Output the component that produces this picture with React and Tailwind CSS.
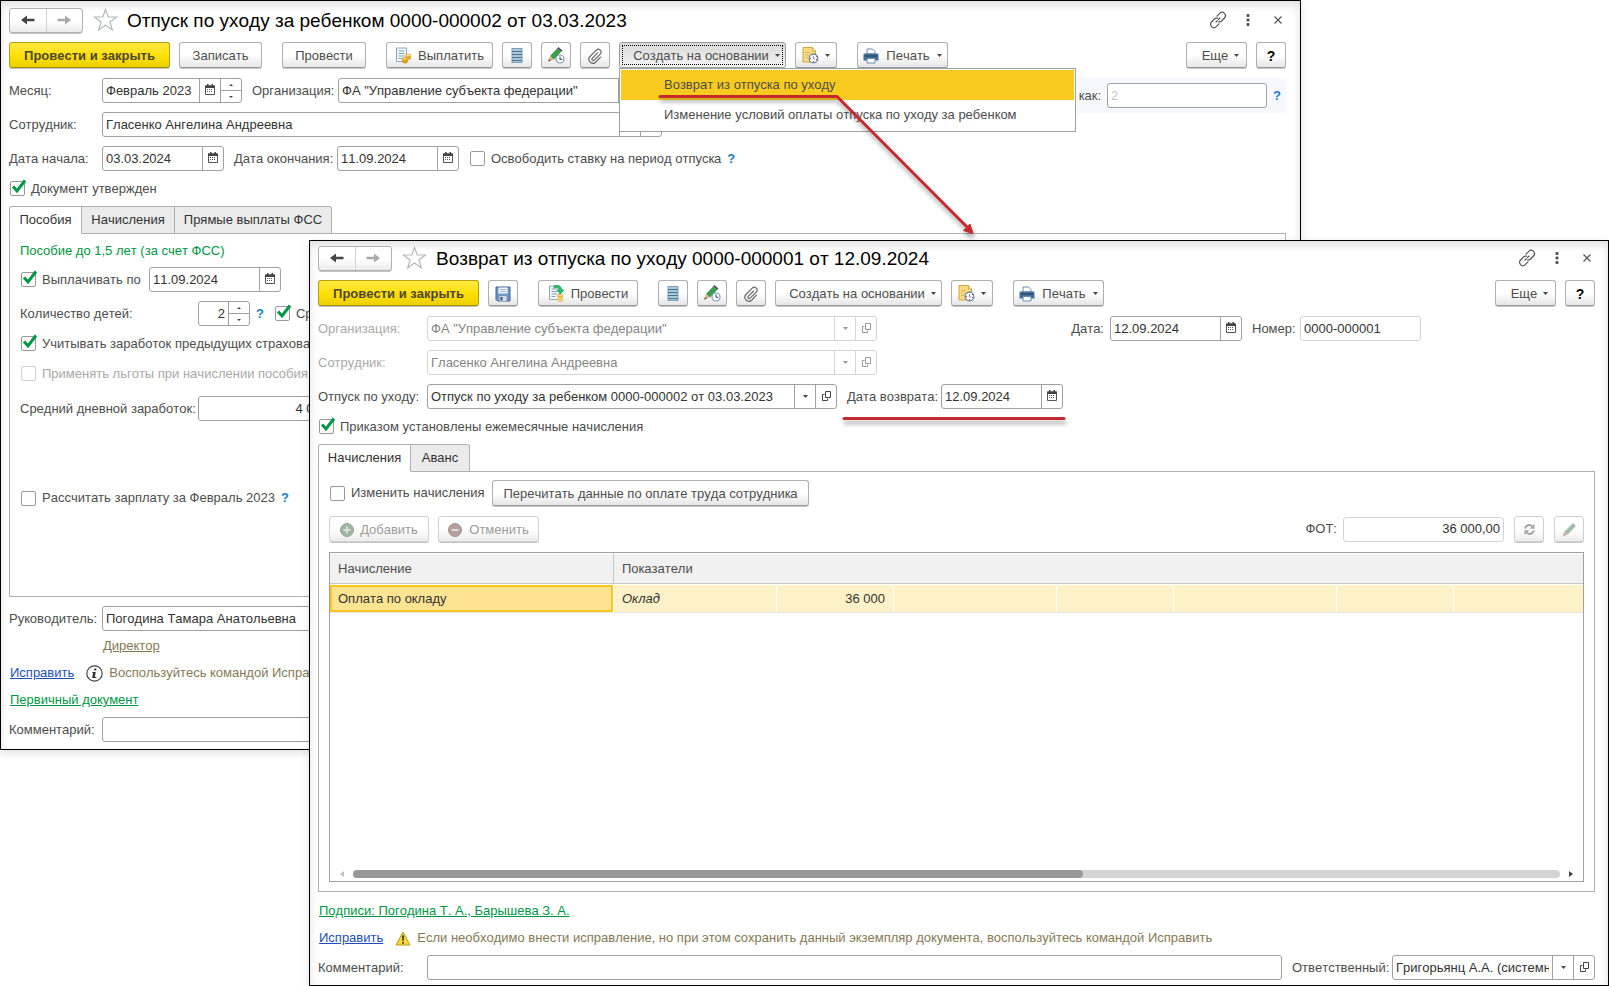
import React, { useState } from "react";

/* ---------- icons ---------- */

const ArrowIcon = ({ right, color }) => (
  <svg width="16" height="12" viewBox="0 0 16 12" className={right ? "rotate-180" : ""}>
    <path d="M1 6l6-4.500v3.300h7.500v2.400H7v3.300z" fill={color} />
  </svg>
);

const StarIcon = () => (
  <svg width="25" height="24" viewBox="0 0 25 24" fill="#fff" stroke="#b4b9be" strokeWidth="1.200">
    <path d="M12.500 1.500l2.700 7.500h8.300l-6.600 4.900 2.500 8.100-6.900-4.900-6.900 4.900 2.500-8.100L1.500 9h8.300z" />
  </svg>
);

const LinkIcon = () => (
  <svg width="18" height="18" viewBox="0 0 18 18" fill="none" stroke="#555" strokeWidth="1.200" strokeLinecap="round">
    <path d="M8 5.200l2.800-2.800a3.200 3.200 0 0 1 4.700 4.600l-3 3a3 3 0 0 1-3 .8" />
    <path d="M10 12.800l-2.800 2.800a3.200 3.200 0 0 1-4.700-4.600l3-3a3 3 0 0 1 3-.8" />
    <path d="M7 11l4-4" strokeDasharray="2 1.600" />
  </svg>
);

const DotsIcon = () => (
  <svg width="4" height="12" viewBox="0 0 4 12" fill="#555">
    <rect x="0.500" y="0" width="3" height="3" rx="1" />
    <rect x="0.500" y="4.500" width="3" height="3" rx="1" />
    <rect x="0.500" y="9" width="3" height="3" rx="1" />
  </svg>
);

const CloseIcon = () => (
  <svg width="8" height="8" viewBox="0 0 8 8" stroke="#555" strokeWidth="1.200">
    <path d="M0.500 0.500l7 7M7.500 0.500l-7 7" />
  </svg>
);

const Caret = ({ color = "#444" }) => (
  <svg width="5" height="3" viewBox="0 0 5 3" className="shrink-0">
    <path d="M0 0h5L2.500 3z" fill={color} />
  </svg>
);

const CalendarIcon = () => (
  <svg width="10" height="11" viewBox="0 0 10 11" className="mb-0.5">
    <path d="M0.500 2h9v8.500h-9z" fill="#fff" stroke="#555" />
    <path d="M0 1.500h10V4H0z" fill="#444" />
    <path d="M2 0h1.500v2H2zM6.500 0H8v2H6.500z" fill="#444" />
    <path d="M2 5.500h6M2 7.500h6" stroke="#555" strokeDasharray="1 1" />
  </svg>
);

const OpenIcon = ({ color = "#444" }) => (
  <svg width="9" height="10" viewBox="0 0 9 10" fill="none" stroke={color} className="mb-0.5">
    <path d="M3.500 0.500h5v6h-5z" />
    <path d="M2.500 3.500h-2v6h5v-2" />
  </svg>
);

const ListIcon = () => (
  <svg width="12" height="16" viewBox="0 0 12 16">
    <rect x="1" y="0.500" width="10" height="14" fill="#a9c8dc" stroke="#7f9fb5" />
    <path d="M1 3.500h10M1 6.500h10M1 9.500h10M1 12.500h10" stroke="#4d7591" />
  </svg>
);

const PencilClockIcon = () => (
  <svg width="17" height="17" viewBox="0 0 17 17">
    <path d="M2 9l7-7.500 4 3.500-7 7.500z" fill="#3f9b52" />
    <path d="M9 1.500L10.500 0l4 3.500L13 5z" fill="#4a5560" />
    <path d="M2 9l-1.700 5.500L6 12.500z" fill="#d8b07c" />
    <path d="M0.300 14.500l.7-2.300 1.600 1.500z" fill="#333" />
    <circle cx="12" cy="12" r="4" fill="#fff" stroke="#7f9db6" strokeWidth="1.200" />
    <path d="M12 9.500V12.300h2.300" fill="none" stroke="#345" />
  </svg>
);

const ClipIcon = () => (
  <svg width="16" height="16" viewBox="0 0 16 16" fill="none" stroke="#6a6a6a" strokeWidth="1.200" strokeLinecap="round">
    <path d="M10.500 5L5.300 10.300a1.300 1.300 0 0 0 1.900 1.900l6-6.100a2.700 2.700 0 0 0-3.900-3.900L3 8.500a4 4 0 0 0 5.600 5.700L13.500 9.200" />
  </svg>
);

const DocLines = () => (
  <>
    <path d="M1.500 1h10v13.500h-10z" fill="#f4f8fa" stroke="#8fa6b5" />
    <path d="M3.500 4h6M3.500 6.500h6M3.500 9h6M3.500 11.500h4" stroke="#7fa6c0" />
  </>
);

const PayIcon = () => (
  <svg width="17" height="17" viewBox="0 0 17 17" className="shrink-0">
    <DocLines />
    <path d="M7 12v2.500c0 2.500 6 2.500 6 0V12z" fill="#d99c1e" />
    <ellipse cx="10" cy="12" rx="3" ry="1.400" fill="#ffd95e" stroke="#c98d18" strokeWidth=".6" />
    <path d="M10.500 8.500v2.700c0 2 5.500 2 5.500 0V8.500z" fill="#e6ab27" />
    <ellipse cx="13.200" cy="8.500" rx="2.800" ry="1.400" fill="#ffe07a" stroke="#c98d18" strokeWidth=".6" />
  </svg>
);

const PostIcon = () => (
  <svg width="17" height="17" viewBox="0 0 17 17" className="shrink-0">
    <DocLines />
    <path d="M6 1c4-1.500 7.500 0 8 4h2l-3.500 4L9 5h2.200C11 3 9 2 6 3z" fill="#22c56c" stroke="#128548" strokeWidth=".6" />
    <path d="M9.500 10.500v5c0 1.600 5.500 1.600 5.500 0v-5z" fill="#e9b02c" />
    <path d="M9.500 12.500c1 1 4.500 1 5.500 0M9.500 14.500c1 1 4.500 1 5.500 0" stroke="#fff0b0" fill="none" />
    <ellipse cx="12.200" cy="10.500" rx="2.700" ry="1.200" fill="#ffe07a" stroke="#c98d18" strokeWidth=".5" />
  </svg>
);

const DiskIcon = () => (
  <svg width="16" height="16" viewBox="0 0 16 16">
    <path d="M1 1h14v14H2.500L1 13.500z" fill="#6f97c8" stroke="#3f6596" />
    <path d="M3.500 1.500h9v6h-9z" fill="#f4f8fc" />
    <path d="M5 3.500h6M5 5.500h6" stroke="#9db3ca" />
    <path d="M4.500 10h7v5h-7z" fill="#cfdbe8" />
    <path d="M5.500 11h2v3.500h-2z" fill="#2f4f78" />
  </svg>
);

const NoteClockIcon = () => (
  <svg width="17" height="17" viewBox="0 0 17 17" className="shrink-0">
    <path d="M1 .5h9.500L13.500 4v11H1z" fill="#f7dc84" stroke="#cfa643" />
    <path d="M10.500.5V4h3" fill="#fff3c4" stroke="#cfa643" />
    <path d="M3 5.500h5M3 8h4M3 10.500h3" stroke="#dcb95c" />
    <circle cx="11.500" cy="11.500" r="4.300" fill="#fff" stroke="#5d83ad" strokeWidth="1.200" />
    <path d="M11.500 11.500V9.300M11.500 11.500l1.500.8" stroke="#5d83ad" />
    <path d="M14 9.500h1M8 11.500h1M11 14.500h1M14 12.500h1" stroke="#d8342c" />
  </svg>
);

const PrintIcon = () => (
  <svg width="16" height="16" viewBox="0 0 16 16" className="shrink-0">
    <path d="M4 6V1h5.500L12 3.500V6z" fill="#fff" stroke="#6d8bab" />
    <path d="M1.500 5.500h13a1 1 0 0 1 1 1v6h-15v-6a1 1 0 0 1 1-1z" fill="#456f99" />
    <path d="M2 8h12" stroke="#1f3f60" />
    <path d="M4 10.500h8V15H4z" fill="#fff" stroke="#6d8bab" />
  </svg>
);

const RefreshIcon = () => (
  <svg width="11" height="11" viewBox="0 0 12 12" fill="none" stroke="#a6a6a6" strokeWidth="2.200">
    <path d="M1.300 5A4.500 4.500 0 0 1 9 2.600M10.700 7A4.500 4.500 0 0 1 3 9.400" />
    <path d="M11.500 0v5.200H6.300zM.5 12V6.800h5.200z" fill="#a6a6a6" stroke="none" />
  </svg>
);

const PencilIcon = () => (
  <svg width="14" height="14" viewBox="0 0 14 14">
    <path d="M2.500 8.500L9.500 1.500l3 3-7 7z" fill="#a3bda6" />
    <path d="M9.500 1.500L11 .3 13.700 3 12.500 4.500z" fill="#a0a4ae" />
    <path d="M2.500 8.500L.5 13.500l5-2z" fill="#c4ac98" />
  </svg>
);

const RoundIcon = ({ minus }) => (
  <svg width="14" height="14" viewBox="0 0 14 14" className="shrink-0">
    <circle cx="7" cy="7" r="6.500" fill={minus ? "#b5a09c" : "#9fb5a3"} stroke={minus ? "#a8928e" : "#8ea893"} />
    <path d={minus ? "M3.500 7h7" : "M3.500 7h7M7 3.500v7"} stroke="#dedede" strokeWidth="2" />
  </svg>
);

const InfoIcon = () => (
  <svg width="17" height="17" viewBox="0 0 17 17" className="shrink-0">
    <circle cx="8.500" cy="8.500" r="7.700" fill="#fff" stroke="#444" strokeWidth="1.200" />
    <path d="M8.300 3.500h2v2h-2zM6.500 7h3.300l-1 5h1.500v1H6.200l.9-5h-.9z" fill="#333" />
  </svg>
);

const WarnIcon = () => (
  <svg width="16" height="15" viewBox="0 0 16 15" className="shrink-0">
    <path d="M8 1l7 13H1z" fill="#f5d93a" stroke="#b89c20" strokeLinejoin="round" />
    <path d="M7 4.500h2L8.600 10H7.400zM7.200 11h1.600v1.700H7.200z" fill="#333" />
  </svg>
);

/* ---------- controls ---------- */

function Button({ children, className = "", disabled, yellow, pressed, ...rest }) {
  let look = "border-[#b0b0b0] border-b-[#999] bg-linear-to-b from-white from-50% to-[#e6e6e6] text-[#4d4d4d]";
  if (disabled) look = "border-[#d0d0d0] bg-linear-to-b from-white from-50% to-[#ececec] text-[#9b9b9b]";
  if (yellow) look = "border-[#b3a012] border-b-[#a08e00] bg-linear-to-b from-[#ffe83c] via-[#ffe100] to-[#ecd000] text-[#4d4636] font-bold";
  if (pressed) look = "border-[#a0a0a0] bg-linear-to-b from-[#d9d9d9] to-[#f4f4f4] text-[#4d4d4d]";
  return (
    <button
      type="button"
      disabled={disabled}
      className={`h-[26px] shrink-0 flex items-center justify-center rounded-[3px] border pt-px shadow-[0_1px_0_#c4c4c4] whitespace-nowrap ${look} ${className}`}
      {...rest}
    >
      {children}
    </button>
  );
}

const SideButton = ({ children, label, light }) => (
  <button
    type="button"
    aria-label={label}
    className={`w-[21px] shrink-0 flex items-center justify-center border-l ${light ? "border-[#d5d5d5]" : "border-[#a0a0a0]"}`}
  >
    {children}
  </button>
);

const Spinner = () => (
  <span className="w-[21px] shrink-0 flex flex-col border-l border-[#a0a0a0]">
    <button type="button" aria-label="Больше" className="flex-1 flex items-center justify-center">
      <svg width="4" height="2" viewBox="0 0 4 2"><path d="M0 2h4L2 0z" fill="#444" /></svg>
    </button>
    <button type="button" aria-label="Меньше" className="flex-1 flex items-center justify-center border-t border-[#a0a0a0]">
      <svg width="4" height="2" viewBox="0 0 4 2"><path d="M0 0h4L2 2z" fill="#444" /></svg>
    </button>
  </span>
);

// buttons: any of "date", "spin", "list", "open"
function Field({ id, value, className = "", inputClass = "", buttons = [], disabled, light, placeholder }) {
  const pale = disabled || light;
  const icon = disabled ? "#999" : "#444";
  return (
    <div className={`h-[25px] flex rounded-[3px] border bg-white ${pale ? "border-[#d5d5d5]" : "border-[#a0a0a0]"} ${className}`}>
      <input
        id={id}
        type="text"
        defaultValue={value}
        placeholder={placeholder}
        disabled={disabled}
        className={`min-w-0 flex-1 px-[3px] bg-transparent outline-none placeholder:text-[#c4c4c4] ${disabled ? "text-[#858585]" : "text-[#333]"} ${inputClass}`}
      />
      {buttons.includes("date") && <SideButton label="Календарь"><CalendarIcon /></SideButton>}
      {buttons.includes("spin") && <Spinner />}
      {buttons.includes("list") && <SideButton label="Выбрать" light={pale}><Caret color={icon} /></SideButton>}
      {buttons.includes("open") && <SideButton label="Открыть" light={pale}><OpenIcon color={icon} /></SideButton>}
    </div>
  );
}

const Label = ({ htmlFor, children, className = "" }) => (
  <label htmlFor={htmlFor} className={`shrink-0 whitespace-nowrap ${className}`}>{children}</label>
);

function Check({ label, initial = false, disabled, className = "" }) {
  const [on, setOn] = useState(initial);
  return (
    <label className={`h-[15px] flex items-center gap-1.5 whitespace-nowrap ${disabled ? "text-[#a9a9a9]" : ""} ${className}`}>
      <span className="relative size-[15px] shrink-0">
        <input
          type="checkbox"
          checked={on}
          disabled={disabled}
          onChange={(e) => setOn(e.target.checked)}
          className={`block size-[15px] appearance-none rounded-[2px] border bg-white ${disabled ? "border-[#d0d0d0]" : "border-[#999]"}`}
        />
        {on && (
          <svg width="17" height="16" viewBox="0 0 17 16" className="absolute -top-[2px] left-0 pointer-events-none">
            <path d="M3 7.500l4 4.500L15 1.500" fill="none" stroke="#009646" strokeWidth="3" />
          </svg>
        )}
      </span>
      {label}
    </label>
  );
}

const Hint = ({ className = "" }) => (
  <button type="button" className={`font-bold text-[#1b7fc4] ${className}`}>?</button>
);

function TitleBar({ title }) {
  return (
    <header className="h-6 flex items-center">
      <div className="h-[25px] w-[74px] shrink-0 flex rounded-[3px] border border-[#b0b0b0] shadow-[0_1px_0_#c4c4c4] bg-linear-to-b from-white from-50% to-[#ececec]">
        <button type="button" aria-label="Назад" className="flex-1 flex items-center justify-center border-r border-[#d0d0d0]">
          <ArrowIcon color="#444" />
        </button>
        <button type="button" aria-label="Вперед" className="flex-1 flex items-center justify-center">
          <ArrowIcon right color="#a9a9a9" />
        </button>
      </div>
      <button type="button" aria-label="Избранное" className="ml-2.5"><StarIcon /></button>
      <h1 className="ml-[9px] pt-px text-[19px] leading-6 text-black whitespace-nowrap">{title}</h1>
      <div className="ml-auto -mr-[7px] flex">
        <button type="button" aria-label="Ссылка" className="w-[30px] flex items-center justify-center"><LinkIcon /></button>
        <button type="button" aria-label="Меню" className="w-[30px] flex items-center justify-center"><DotsIcon /></button>
        <button type="button" aria-label="Закрыть" className="w-[30px] flex items-center justify-center"><CloseIcon /></button>
      </div>
    </header>
  );
}

function Tabs({ items }) {
  const [active, setActive] = useState(0);
  return (
    <div role="tablist" className="relative z-1 flex">
      {items.map((t, i) => (
        <button
          key={t.name}
          type="button"
          role="tab"
          aria-selected={i === active}
          onClick={() => setActive(i)}
          className={`h-7 border border-[#b0b0b0] text-[#333] ${t.width} ${i ? "border-l-0" : "rounded-tl-[3px]"} ${i === items.length - 1 ? "rounded-tr-[3px]" : ""} ${i === active ? "border-b-white bg-white" : "bg-[#ebebeb]"}`}
        >
          {t.name}
        </button>
      ))}
    </div>
  );
}

const windowLook =
  "border border-black bg-white shadow-[inset_0_4px_8px_rgba(0,0,0,0.13),0_3px_8px_rgba(0,0,0,0.12)] text-[13px] leading-5 text-[#4d4d4d] flex flex-col overflow-hidden";

/* ---------- documents ---------- */

function LeaveDocument() {
  return (
    <section className={`absolute left-0 right-[308px] top-0 min-h-[750px] pl-2 pr-3.5 pt-[7px] pb-[7px] ${windowLook}`}>
      <TitleBar title="Отпуск по уходу за ребенком 0000-000002 от 03.03.2023" />

      <div className="mt-2.5 flex">
        <Button yellow className="w-[161px]">Провести и закрыть</Button>
        <Button className="ml-[9px] w-[83px]">Записать</Button>
        <Button className="ml-5 w-[84px]">Провести</Button>
        <Button className="ml-5 w-[107px] gap-1.5"><PayIcon />Выплатить</Button>
        <Button className="ml-[9px] w-[30px]" aria-label="Список"><ListIcon /></Button>
        <Button className="ml-[9px] w-[30px]" aria-label="Изменить"><PencilClockIcon /></Button>
        <Button className="ml-[9px] w-[30px]" aria-label="Файлы"><ClipIcon /></Button>
        <div className="relative z-2 ml-[9px]">
          <Button pressed className="relative w-[167px] pl-2 gap-1.5">
            <span className="absolute inset-[2px] border border-dotted border-black" />
            Создать на основании<Caret />
          </Button>
          <div role="menu" className="absolute left-0 top-[26px] w-[457px] border border-[#a0a0a0] bg-white p-px pb-0.5">
            <button type="button" role="menuitem" className="block h-[30px] w-full pl-[43px] text-left bg-[#f9cb1f]">Возврат из отпуска по уходу</button>
            <button type="button" role="menuitem" className="block h-[29px] w-full pl-[43px] text-left">Изменение условий оплаты отпуска по уходу за ребенком</button>
          </div>
        </div>
        <Button className="ml-[9px] w-[42px] gap-1.5" aria-label="Отложить"><NoteClockIcon /><Caret /></Button>
        <Button className="ml-5 w-[91px] gap-[7px]"><PrintIcon />Печать<Caret /></Button>
        <Button className="ml-auto w-[61px] pl-2 gap-1.5">Еще<Caret /></Button>
        <Button className="ml-[9px] w-[30px]"><b className="text-black text-sm">?</b></Button>
      </div>

      <div className="mt-2.5 h-[25px] flex items-start">
        <Label htmlFor="month" className="w-[93px] leading-[25px]">Месяц:</Label>
        <Field id="month" value="Февраль 2023" className="w-[140px] shrink-0" buttons={["date", "spin"]} />
        <Label htmlFor="org" className="ml-2.5 w-[86px] leading-[25px]">Организация:</Label>
        <Field id="org" value={'ФА "Управление субъекта федерации"'} className="w-[323px] shrink-0" buttons={["list", "open"]} />
        <div className="ml-auto h-[35px] w-[300px] flex items-center justify-end bg-[#f7f8fe]">
          <Label htmlFor="asn">как:</Label>
          <Field id="asn" placeholder="2" className="ml-1.5 w-40" />
          <Hint className="ml-1.5 mr-[5px]" />
        </div>
      </div>

      <div className="mt-[9px] flex items-center">
        <Label htmlFor="emp" className="w-[93px]">Сотрудник:</Label>
        <Field id="emp" value="Гласенко Ангелина Андреевна" className="w-[560px]" buttons={["list", "open"]} />
      </div>

      <div className="mt-[9px] flex items-center">
        <Label htmlFor="start" className="w-[93px]">Дата начала:</Label>
        <Field id="start" value="03.03.2024" className="w-[122px]" buttons={["date"]} />
        <Label htmlFor="end" className="ml-2.5 w-[103px]">Дата окончания:</Label>
        <Field id="end" value="11.09.2024" className="w-[122px]" buttons={["date"]} />
        <Check className="ml-[11px]" label="Освободить ставку на период отпуска" />
        <Hint className="ml-1.5" />
      </div>

      <Check className="mt-2.5 pl-px" initial label="Документ утвержден" />

      <div className="mt-2.5">
        <Tabs
          items={[
            { name: "Пособия", width: "w-[73px]" },
            { name: "Начисления", width: "w-[93px]" },
            { name: "Прямые выплаты ФСС", width: "w-[157px]" },
          ]}
        />
        <div className="-mt-px h-[364px] border border-[#b0b0b0] pl-[10px] pt-[7px]">
          <p className="text-[#009646]">Пособие до 1,5 лет (за счет ФСС)</p>
          <div className="mt-1.5 flex items-center">
            <Check className="w-[129px] pl-px" initial label="Выплачивать по" />
            <Field id="pay-to" value="11.09.2024" className="w-[132px]" buttons={["date"]} />
          </div>
          <div className="mt-[9px] flex items-center">
            <Label htmlFor="kids" className="w-[178px]">Количество детей:</Label>
            <Field id="kids" value="2" className="w-[52px]" inputClass="text-right" buttons={["spin"]} />
            <Hint className="ml-1.5" />
            <Check className="ml-[11px]" initial label="Средний заработок" />
          </div>
          <Check className="mt-2.5 pl-px" initial label="Учитывать заработок предыдущих страхователей" />
          <Check className="mt-[15px] pl-px" disabled label="Применять льготы при начислении пособия" />
          <div className="mt-[15px] flex items-center">
            <Label htmlFor="avg" className="w-[178px]">Средний дневной заработок:</Label>
            <Field id="avg" value="4 000,00" className="w-[152px]" inputClass="text-right" />
          </div>
          <div className="mt-[67px] flex items-center">
            <Check className="pl-px" label="Рассчитать зарплату за Февраль 2023" />
            <Hint className="ml-1.5" />
          </div>
        </div>
      </div>

      <div className="mt-[9px] flex items-center">
        <Label htmlFor="head" className="w-[93px]">Руководитель:</Label>
        <Field id="head" value="Погодина Тамара Анатольевна" className="w-[300px]" buttons={["list", "open"]} />
      </div>
      <div className="mt-[5px] pl-[94px]"><a href="#director" className="underline text-[#857955]">Директор</a></div>
      <div className="mt-[7px] flex items-center pl-px">
        <a href="#fix" className="underline text-[#1d50b8]">Исправить</a>
        <span className="ml-3 flex items-center gap-1.5 text-[#857955] whitespace-nowrap"><InfoIcon />Воспользуйтесь командой Исправить</span>
      </div>
      <div className="mt-[7px] pl-px"><a href="#source" className="underline text-[#009646]">Первичный документ</a></div>
      <div className="mt-[7px] flex items-center">
        <Label htmlFor="comment1" className="w-[93px]">Комментарий:</Label>
        <Field id="comment1" className="flex-1" />
      </div>
    </section>
  );
}

const emptyCols = [3, 4, 5, 6, 7];
const cellLines = "border-t border-t-white border-r border-r-white border-b border-b-[#e4e4e4]";

function ReturnDocument() {
  return (
    <section className={`relative ml-[309px] pl-2 pr-[13px] pt-[5px] pb-[5px] ${windowLook}`}>
      <TitleBar title="Возврат из отпуска по уходу 0000-000001 от 12.09.2024" />

      <div className="mt-2.5 flex">
        <Button yellow className="w-[161px]">Провести и закрыть</Button>
        <Button className="ml-[9px] w-[30px]" aria-label="Записать"><DiskIcon /></Button>
        <Button className="ml-5 w-[100px] gap-1.5"><PostIcon />Провести</Button>
        <Button className="ml-5 w-[30px]" aria-label="Список"><ListIcon /></Button>
        <Button className="ml-[9px] w-[30px]" aria-label="Изменить"><PencilClockIcon /></Button>
        <Button className="ml-[9px] w-[30px]" aria-label="Файлы"><ClipIcon /></Button>
        <Button className="ml-[9px] w-[167px] pl-2 gap-1.5">Создать на основании<Caret /></Button>
        <Button className="ml-[9px] w-[42px] gap-1.5" aria-label="Отложить"><NoteClockIcon /><Caret /></Button>
        <Button className="ml-5 w-[91px] gap-[7px]"><PrintIcon />Печать<Caret /></Button>
        <Button className="ml-auto w-[61px] pl-2 gap-1.5">Еще<Caret /></Button>
        <Button className="ml-[9px] w-[30px]"><b className="text-black text-sm">?</b></Button>
      </div>

      <div className="mt-2.5 flex items-center">
        <Label htmlFor="org2" className="w-[109px] text-[#a9a9a9]">Организация:</Label>
        <Field id="org2" disabled value={'ФА "Управление субъекта федерации"'} className="w-[450px]" buttons={["list", "open"]} />
        <Label htmlFor="date2" className="ml-auto">Дата:</Label>
        <Field id="date2" value="12.09.2024" className="ml-1.5 w-[132px]" buttons={["date"]} />
        <Label htmlFor="num2" className="ml-2.5 w-12">Номер:</Label>
        <Field id="num2" light value="0000-000001" className="mr-[174px] w-[121px]" />
      </div>

      <div className="mt-[9px] flex items-center">
        <Label htmlFor="emp2" className="w-[109px] text-[#a9a9a9]">Сотрудник:</Label>
        <Field id="emp2" disabled value="Гласенко Ангелина Андреевна" className="w-[450px]" buttons={["list", "open"]} />
      </div>

      <div className="mt-[9px] flex items-center">
        <Label htmlFor="leave2" className="w-[109px]">Отпуск по уходу:</Label>
        <Field id="leave2" value="Отпуск по уходу за ребенком 0000-000002 от 03.03.2023" className="w-[410px]" buttons={["list", "open"]} />
        <Label htmlFor="back2" className="ml-2.5 w-[94px]">Дата возврата:</Label>
        <Field id="back2" value="12.09.2024" className="w-[122px]" buttons={["date"]} />
      </div>

      <Check className="mt-2.5 pl-px" initial label="Приказом установлены ежемесячные начисления" />

      <div className="mt-2.5">
        <Tabs
          items={[
            { name: "Начисления", width: "w-[93px]" },
            { name: "Аванс", width: "w-[59px]" },
          ]}
        />
        <div className="-mt-px border border-[#b0b0b0] px-2.5 pt-2 pb-[9px]">
          <div className="flex items-center">
            <Check className="w-[163px] pl-px" label="Изменить начисления" />
            <Button className="w-[317px]">Перечитать данные по оплате труда сотрудника</Button>
          </div>
          <div className="mt-2.5 flex items-center">
            <Button disabled className="w-[100px] gap-1.5"><RoundIcon />Добавить</Button>
            <Button disabled className="ml-[9px] w-[101px] gap-[7px]"><RoundIcon minus />Отменить</Button>
            <Label htmlFor="fot" className="ml-auto">ФОТ:</Label>
            <Field id="fot" light value="36 000,00" className="ml-1.5 w-[161px]" inputClass="text-right" />
            <Button disabled className="ml-2.5 w-[30px]" aria-label="Обновить"><RefreshIcon /></Button>
            <Button disabled className="ml-2.5 w-[30px]" aria-label="Редактировать"><PencilIcon /></Button>
          </div>

          <div className="mt-2.5 h-[330px] flex flex-col border border-[#a0a0a0]">
            <table className="w-full table-fixed border-separate border-spacing-0">
              <colgroup>
                <col className="w-[284px]" />
                <col className="w-[163px]" />
                <col className="w-[117px]" />
                <col className="w-[163px]" />
                <col className="w-[117px]" />
                <col className="w-[163px]" />
                <col className="w-[117px]" />
                <col />
              </colgroup>
              <thead>
                <tr className="h-[31px] bg-[#f1f1f1] text-left">
                  <th className="pl-2 font-normal border-t border-t-white border-r border-b border-[#c8c8c8]">Начисление</th>
                  <th colSpan="7" className="pl-2 font-normal border-t border-t-white border-b border-[#c8c8c8]">Показатели</th>
                </tr>
              </thead>
              <tbody>
                <tr className="h-[29px] bg-[#fdf1c7] text-[#333]">
                  <td className={`pl-2 bg-[#fee391] shadow-[inset_0_0_0_2px_#f9c81e] ${cellLines}`}>Оплата по окладу</td>
                  <td className={`pl-2 italic ${cellLines}`}>Оклад</td>
                  <td className={`pr-2 text-right ${cellLines}`}>36 000</td>
                  {emptyCols.map((c) => (
                    <td key={c} className={`last:border-r-0 ${cellLines}`}></td>
                  ))}
                </tr>
              </tbody>
            </table>

            <div className="mt-auto mb-[3px] flex items-center px-2.5">
              <svg width="4" height="6" viewBox="0 0 4 6"><path d="M4 0v6L0 3z" fill="#c0c0c0" /></svg>
              <div className="mx-[9px] h-2 flex-1 rounded-full bg-[#d4d4d4]">
                <div className="h-2 w-[60.5%] rounded-full bg-[#989898]"></div>
              </div>
              <svg width="4" height="6" viewBox="0 0 4 6"><path d="M0 0v6l4-3z" fill="#444" /></svg>
            </div>
          </div>
        </div>
      </div>

      <div className="mt-[9px] pl-px"><a href="#signs" className="underline text-[#009646]">Подписи: Погодина Т. А., Барышева З. А.</a></div>
      <div className="mt-[7px] flex items-center pl-px">
        <a href="#fix2" className="underline text-[#1d50b8]">Исправить</a>
        <span className="ml-3 flex items-center gap-1.5 text-[#857955] whitespace-nowrap">
          <WarnIcon />Если необходимо внести исправление, но при этом сохранить данный экземпляр документа, воспользуйтесь командой Исправить
        </span>
      </div>
      <div className="mt-[7px] flex items-center">
        <Label htmlFor="comment2" className="w-[109px]">Комментарий:</Label>
        <Field id="comment2" className="flex-1" />
        <Label htmlFor="resp" className="ml-2.5 w-[100px]">Ответственный:</Label>
        <Field id="resp" value="Григорьянц А.А. (системный)" className="w-[203px]" buttons={["list", "open"]} />
      </div>
    </section>
  );
}

export default function App() {
  return (
    <main className="relative bg-white pt-60 font-['Liberation_Sans',Arial,sans-serif] [font-kerning:none]">
      <LeaveDocument />
      <ReturnDocument />

      {/* callout: menu item -> opened document */}
      <svg width="1080" height="430" viewBox="0 0 1080 430" className="absolute left-0 top-0 z-10 pointer-events-none drop-shadow-[1px_4px_2px_rgba(0,0,0,0.35)]">
        <path d="M660 96.500H837L967 227" fill="none" stroke="#c62a2f" strokeWidth="3" strokeLinejoin="round" strokeLinecap="round" />
        <path d="M973 233.500l-9.500-3 6.500-6.500z" fill="#c62a2f" stroke="#c62a2f" />
        <path d="M844 418.500H1064" stroke="#c62a2f" strokeWidth="3" strokeLinecap="round" />
      </svg>
    </main>
  );
}
